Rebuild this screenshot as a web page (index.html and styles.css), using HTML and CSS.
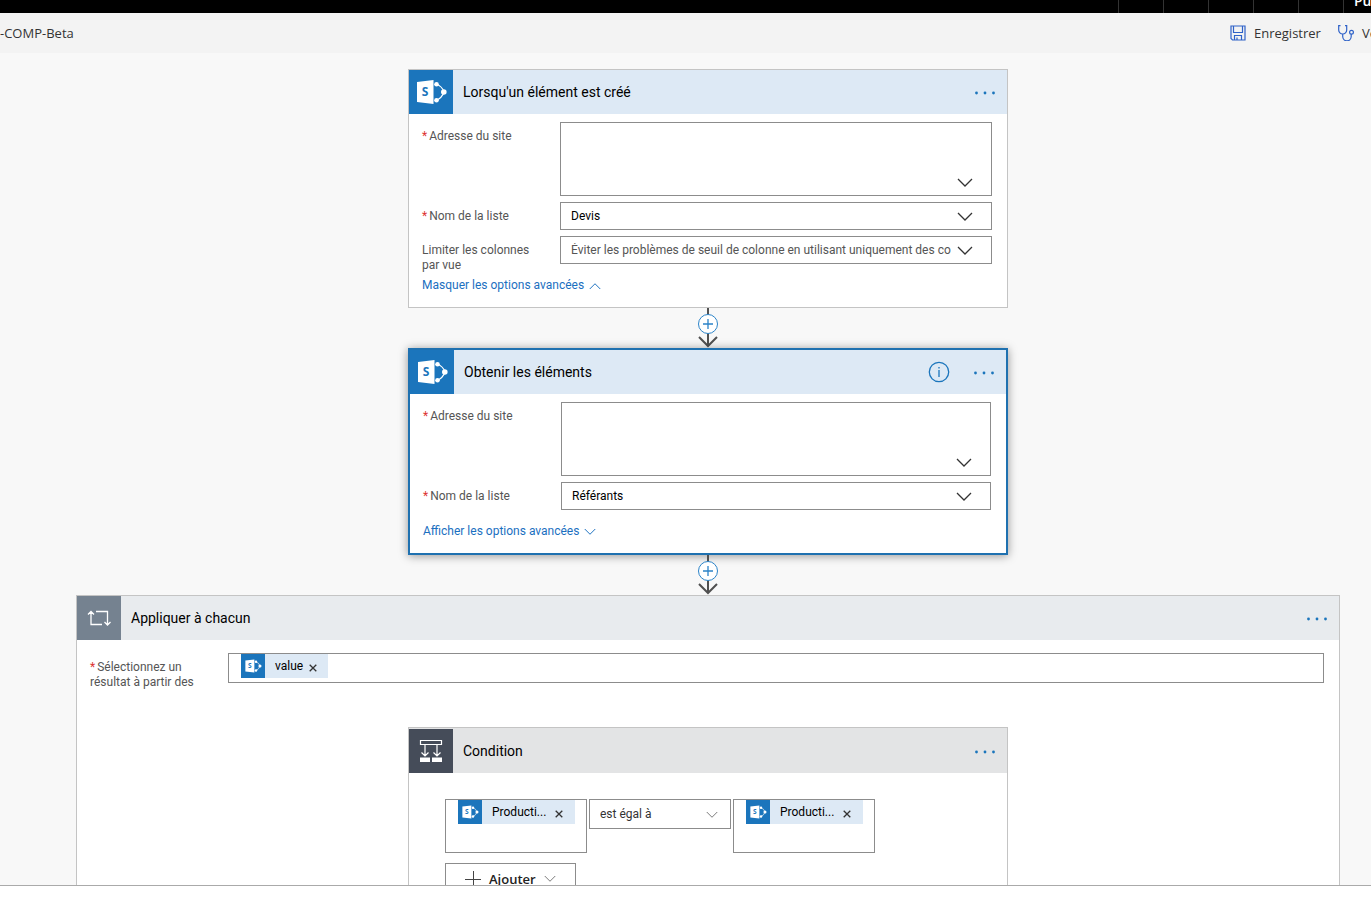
FILE: index.html
```html
<!DOCTYPE html>
<html lang="fr">
<head>
<meta charset="utf-8">
<meta name="viewport" content="width=device-width, initial-scale=1">
<title>COMP-Beta</title>
<link rel="stylesheet" href="styles.css">
</head>
<body>
<svg class="sprite" aria-hidden="true">
  <symbol id="sharepoint" viewBox="0 0 44 44">
    <path d="M27 14Q33 16 35 22Q33 28 27 30.500" fill="none" stroke="#fff" stroke-width="1.200"/>
    <circle cx="27.500" cy="14.200" r="2.300" fill="#fff"/>
    <circle cx="34.800" cy="22" r="2.800" fill="#fff"/>
    <circle cx="27.500" cy="30.300" r="2.300" fill="#fff"/>
    <path d="M8 12l16.500-2v24L8 32z" fill="#fff"/>
    <text x="16" y="26" text-anchor="middle" font-family="Open Sans, sans-serif" font-size="12" font-weight="700" fill="#1b75bc">S</text>
  </symbol>
  <symbol id="chevron" viewBox="0 0 16 10"><path d="M1 1l7 7 7-7" fill="none" stroke="currentColor" stroke-width="1.300"/></symbol>
  <symbol id="dots" viewBox="0 0 20 6"><g fill="currentColor"><circle cx="1.500" cy="4" r="1.400"/><circle cx="10" cy="4" r="1.400"/><circle cx="18.500" cy="4" r="1.400"/></g></symbol>
  <symbol id="connector" viewBox="0 0 20 40">
    <path d="M10 0v37M1 29l9 9 9-9" fill="none" stroke="#505050" stroke-width="2"/>
    <circle cx="10" cy="16" r="9.500" fill="#fff" stroke="#2b83c8" stroke-width="1"/>
    <path d="M5 16h10M10 11v10" stroke="#2b83c8" stroke-width="1.300"/>
  </symbol>
  <symbol id="close" viewBox="0 0 8 8"><path d="M.7.7l6.600 6.600M7.300.7L.7 7.300" stroke="#333" stroke-width="1.300"/></symbol>
</svg>

<header class="topbar">
  <span class="topbar-item"></span><span class="topbar-item"></span><span class="topbar-item"></span><span class="topbar-item"></span><span class="topbar-item"></span>
  <span class="topbar-user">Pu</span>
</header>

<div class="commandbar">
  <h1 class="flow-name">-COMP-Beta</h1>
  <nav class="commands">
    <button class="command" type="button">
      <svg width="16" height="16" viewBox="0 0 16 16" fill="none" stroke="#2f62c8" stroke-width="1.200" aria-hidden="true"><path d="M1 1h14v14H2.500L1 13.500zM3.500 1v6.500h9V1M4.500 15v-4.500h7V15M7 12.500V15"/></svg>
      Enregistrer
    </button>
    <button class="command" type="button">
      <svg width="16" height="16" viewBox="0 0 16 16" fill="none" stroke="#2f62c8" stroke-width="1.200" aria-hidden="true"><path d="M2.500.7H.7V5a4 4 0 0 0 8 0V.7H7M4.700 9v2.500a4 4 0 0 0 8.500 0V9"/><circle cx="13.500" cy="7.300" r="1.900"/></svg>
      Vé
    </button>
  </nav>
</div>

<main class="canvas">
  <section class="card">
    <div class="card-head">
      <span class="tile"><svg aria-hidden="true"><use href="#sharepoint"/></svg></span>
      <h2 class="card-title">Lorsqu'un élément est créé</h2>
      <button class="more" type="button" aria-label="Plus"><svg><use href="#dots"/></svg></button>
    </div>
    <div class="card-body">
      <div class="row">
        <label class="label" for="site1"><span class="required">*</span>Adresse du site</label>
        <div class="picker"><select id="site1" class="select select-tall"><option></option></select><svg class="picker-arrow picker-arrow-low" aria-hidden="true"><use href="#chevron"/></svg></div>
      </div>
      <div class="row">
        <label class="label" for="list1"><span class="required">*</span>Nom de la liste</label>
        <div class="picker"><select id="list1" class="select"><option>Devis</option></select><svg class="picker-arrow" aria-hidden="true"><use href="#chevron"/></svg></div>
      </div>
      <div class="row">
        <label class="label" for="view1">Limiter les colonnes par vue</label>
        <div class="picker"><select id="view1" class="select select-hint"><option>Éviter les problèmes de seuil de colonne en utilisant uniquement des co</option></select><svg class="picker-arrow" aria-hidden="true"><use href="#chevron"/></svg></div>
      </div>
      <a class="advanced" href="#">Masquer les options avancées <svg class="flip" aria-hidden="true"><use href="#chevron"/></svg></a>
    </div>
  </section>

  <button class="connector" type="button" aria-label="Insérer une étape"><svg><use href="#connector"/></svg></button>

  <section class="card card-selected">
    <div class="card-head">
      <span class="tile"><svg aria-hidden="true"><use href="#sharepoint"/></svg></span>
      <h2 class="card-title">Obtenir les éléments</h2>
      <button class="info" type="button" aria-label="Informations"><svg width="22" height="22" viewBox="0 0 22 22"><circle cx="11" cy="11" r="9.700" fill="none" stroke="currentColor" stroke-width="1.300"/><path d="M11 9v7M11 6v1.500" stroke="currentColor" stroke-width="1.300"/></svg></button>
      <button class="more" type="button" aria-label="Plus"><svg><use href="#dots"/></svg></button>
    </div>
    <div class="card-body">
      <div class="row">
        <label class="label" for="site2"><span class="required">*</span>Adresse du site</label>
        <div class="picker"><select id="site2" class="select select-tall"><option></option></select><svg class="picker-arrow picker-arrow-low" aria-hidden="true"><use href="#chevron"/></svg></div>
      </div>
      <div class="row">
        <label class="label" for="list2"><span class="required">*</span>Nom de la liste</label>
        <div class="picker"><select id="list2" class="select"><option>Référants</option></select><svg class="picker-arrow" aria-hidden="true"><use href="#chevron"/></svg></div>
      </div>
      <a class="advanced" href="#">Afficher les options avancées <svg aria-hidden="true"><use href="#chevron"/></svg></a>
    </div>
  </section>

  <button class="connector" type="button" aria-label="Insérer une étape"><svg><use href="#connector"/></svg></button>

  <section class="card card-loop">
    <div class="card-head">
      <span class="tile"><svg viewBox="0 0 44 44" fill="none" stroke="#fff" stroke-width="1.300" aria-hidden="true"><path d="M19 15.500h11.500V28M25 28.500H14V16M11 18.500l3-3 3 3M27.500 26l3 3 3-3"/></svg></span>
      <h2 class="card-title">Appliquer à chacun</h2>
      <button class="more" type="button" aria-label="Plus"><svg><use href="#dots"/></svg></button>
    </div>
    <div class="card-body">
      <div class="row">
        <span class="label"><span class="required">*</span>Sélectionnez un résultat à partir des</span>
        <div class="tokens">
          <span class="chip"><span class="chip-icon"><svg aria-hidden="true"><use href="#sharepoint"/></svg></span>value<button class="chip-close" type="button" aria-label="Supprimer"><svg><use href="#close"/></svg></button></span>
        </div>
      </div>

      <section class="card card-condition">
        <div class="card-head">
          <span class="tile"><svg viewBox="0 0 44 44" aria-hidden="true"><path d="M11.500 11.500h21v4h-21zM16 16v11M28 16v11M12.500 23.500l3.500 3.500 3.500-3.500M24.500 23.500l3.500 3.500 3.500-3.500" fill="none" stroke="#fff" stroke-width="1.200"/><path d="M11 28.500h10V33H11zM23 28.500h10V33H23z" fill="#fff"/></svg></span>
          <h2 class="card-title">Condition</h2>
          <button class="more" type="button" aria-label="Plus"><svg><use href="#dots"/></svg></button>
        </div>
        <div class="condition-body">
          <div class="expression">
            <div class="tokens operand">
              <span class="chip"><span class="chip-icon"><svg aria-hidden="true"><use href="#sharepoint"/></svg></span>Producti...<button class="chip-close" type="button" aria-label="Supprimer"><svg><use href="#close"/></svg></button></span>
            </div>
            <div class="picker operator"><select class="select" aria-label="Opérateur"><option>est égal à</option></select><svg class="picker-arrow" aria-hidden="true"><use href="#chevron"/></svg></div>
            <div class="tokens operand">
              <span class="chip"><span class="chip-icon"><svg aria-hidden="true"><use href="#sharepoint"/></svg></span>Producti...<button class="chip-close" type="button" aria-label="Supprimer"><svg><use href="#close"/></svg></button></span>
            </div>
          </div>
          <button class="add" type="button"><svg width="16" height="16" viewBox="0 0 16 16" aria-hidden="true"><path d="M0 8.500h16M8.500 0v16" stroke="#444"/></svg>Ajouter<svg class="add-arrow" aria-hidden="true"><use href="#chevron"/></svg></button>
        </div>
      </section>
    </div>
  </section>
</main>
<footer class="footer"></footer>
</body>
</html>
```

FILE: styles.css
```css
* { box-sizing: border-box; }

body {
  margin: 0;
  height: 100vh;
  display: flex;
  flex-direction: column;
  overflow: hidden;
  background: #fff;
  color: #000;
  font: 12px/15px Roboto, "Open Sans", sans-serif;
}

button {
  padding: 0;
  border: 0;
  background: none;
  color: inherit;
  font: inherit;
}

svg { display: block; flex: none; }
.sprite { position: absolute; width: 0; height: 0; }

.topbar {
  flex: none;
  display: flex;
  justify-content: flex-end;
  align-items: flex-end;
  height: 13px;
  overflow: hidden;
  background: #000;
  color: #fff;
}
.topbar-item { width: 45px; height: 13px; border-left: 1px solid #333; }
.topbar-user {
  width: 28px;
  padding-left: 10px;
  border-left: 1px solid #333;
  overflow: hidden;
  font-family: "Open Sans", sans-serif;
  font-size: 14px;
  font-weight: 600;
  line-height: 24px;
}

.commandbar {
  flex: none;
  display: flex;
  align-items: center;
  height: 40px;
  overflow: hidden;
  background: #f3f3f3;
  color: #333;
  font-family: "Open Sans", sans-serif;
}
.flow-name { margin: 0; font-size: 13px; font-weight: 400; line-height: 20px; }
.commands {
  display: flex;
  gap: 17px;
  width: 141px;
  margin-left: auto;
  overflow: hidden;
}
.command {
  flex: none;
  display: flex;
  align-items: center;
  gap: 8px;
  font-size: 13px;
  line-height: 20px;
}

.canvas {
  flex: 1;
  min-height: 0;
  display: flex;
  flex-direction: column;
  align-items: center;
  padding: 16px 31px 0 76px;
  overflow: hidden;
  background: #f8f8f8;
}
.footer { flex: none; height: 22px; border-top: 1px solid #aaa; background: #fff; }

.card {
  flex: none;
  width: 600px;
  max-width: 100%;
  border: 1px solid #c4c4c4;
  background: #fff;
}
.card-selected { border: 2px solid #1f71b0; box-shadow: 0 1px 9px rgba(0, 0, 0, .4); }
.card-head {
  display: flex;
  align-items: center;
  padding-right: 12px;
  background: #dde9f5;
}
.tile { width: 44px; height: 44px; background: #1b75bc; }
.tile svg { width: 44px; height: 44px; }
.card-title { flex: 1; margin: 0 0 0 10px; font-size: 14px; font-weight: 400; line-height: 20px; }
.more, .info { color: #1b75bc; }
.more svg { width: 20px; height: 6px; }
.info { margin-right: 24px; }

.card-body { padding: 8px 15px 14px 13px; }
.row { display: flex; margin-bottom: 6px; }
.row:nth-last-child(2) { min-height: 37px; margin-bottom: 5px; align-items: flex-start; }
.label { flex: none; width: 138px; padding: 7px 24px 0 0; color: #555; }
.required { margin-right: 2px; color: #d33; }

.picker { position: relative; flex: 1; min-width: 0; }
.select {
  display: block;
  width: 100%;
  height: 28px;
  padding: 0 40px 0 10px;
  border: 1px solid #8c8c8c;
  border-radius: 0;
  appearance: none;
  background: #fff;
  color: #000;
  font: inherit;
}
.select-tall { height: 74px; }
.select-hint { color: #555; }
.picker-arrow {
  position: absolute;
  right: 19px;
  top: 10px;
  width: 16px;
  height: 10px;
  color: #333;
  pointer-events: none;
}
.picker-arrow-low { top: auto; bottom: 8px; }

.advanced {
  display: flex;
  align-items: center;
  gap: 5px;
  color: #1b6fbf;
  text-decoration: none;
}
.advanced svg { width: 12px; height: 8px; }
.flip { transform: rotate(180deg); }

.connector { flex: none; width: 20px; height: 40px; }
.connector svg { width: 20px; height: 40px; }

.card-loop { width: 100%; }
.card-loop > .card-head { background: #e8ebee; }
.card-loop > .card-head .tile { background: #758290; }
.card-loop > .card-body { padding: 13px; }
.card-loop > .card-body > .row { height: 30px; min-height: 0; margin: 0 2px 44px 0; }

.tokens { flex: 1; height: 30px; padding-left: 12px; border: 1px solid #8c8c8c; background: #fff; }
.chip {
  display: inline-flex;
  align-items: center;
  height: 24px;
  padding-right: 11px;
  background: #dde9f5;
  vertical-align: top;
}
.chip-icon { margin-right: 10px; background: #1b75bc; }
.chip-icon svg { width: 24px; height: 24px; }
.chip-close { margin: 4px 0 0 6px; }
.chip-close svg { width: 8px; height: 8px; }

.card-condition { margin: 0 auto; }
.card-condition .card-head { padding-top: 1px; background: #e3e4e5; }
.card-condition .tile { background: #454c59; }
.condition-body { padding: 26px 36px; }
.expression { display: flex; align-items: flex-start; gap: 2px; }
.operand { flex: none; width: 142px; height: 54px; }
.operand .chip { padding-right: 12px; }
.operand .chip-close { margin-left: 9px; }
.operator { flex: none; width: 142px; }
.operator .select { height: 30px; color: #333; }
.operator .picker-arrow { right: 13px; top: 12px; width: 12px; height: 8px; color: #777; }
.add {
  display: flex;
  align-items: center;
  gap: 8px;
  height: 32px;
  margin-top: 10px;
  padding: 0 19px;
  border: 1px solid #8c8c8c;
  background: #fff;
  color: #222;
  font-family: "Open Sans", sans-serif;
  font-size: 13px;
  font-weight: 600;
}
.add-arrow { width: 12px; height: 8px; color: #777; }
```
